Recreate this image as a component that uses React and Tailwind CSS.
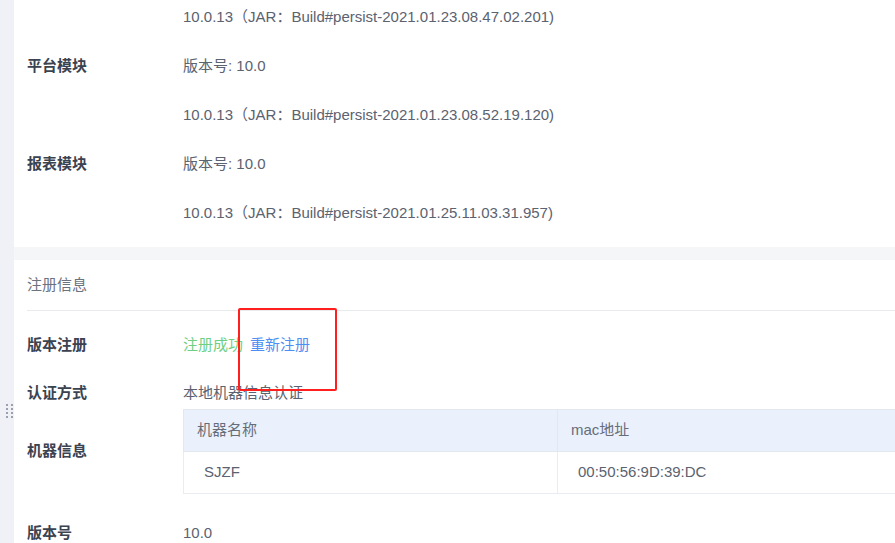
import React from 'react';

const modules = [
    { label: '', value: '10.0.13（JAR：Build#persist-2021.01.23.08.47.02.201)' },
    { label: '平台模块', value: '版本号: 10.0' },
    { label: '', value: '10.0.13（JAR：Build#persist-2021.01.23.08.52.19.120)' },
    { label: '报表模块', value: '版本号: 10.0' },
    { label: '', value: '10.0.13（JAR：Build#persist-2021.01.25.11.03.31.957)' },
];

function Grip() {
    return (
        <div className="grid grid-cols-2 gap-x-[2px] gap-y-[2px]">
            {[0, 1, 2, 3, 4, 5, 6, 7].map(i => (
                <span key={i} className="block h-[2px] w-[2px] bg-[#9aa1ad]" />
            ))}
        </div>
    );
}

export default function App() {
    return (
        <div
            className="relative flex h-[543px] w-[895px] overflow-hidden bg-[#f5f6f8] text-[15px]"
            style={{ fontFamily: '"Liberation Sans", "Noto Sans CJK SC", sans-serif' }}
        >
            {/* left edge strip */}
            <div className="w-[14px] shrink-0 bg-[#eff1f7] pt-[404px] pl-[6px]">
                <Grip />
            </div>

            <div className="flex min-w-0 flex-1 flex-col gap-[13px]">
                {/* module versions */}
                <div className="h-[247px] shrink-0 overflow-hidden bg-white pl-[13px]">
                    <div className="mt-[-7px]">
                        {modules.map((m, i) => (
                            <div key={i} className="flex h-[49px] items-center">
                                <div className="w-[156px] shrink-0 font-bold text-[#3b4250]">{m.label}</div>
                                <div className="whitespace-nowrap text-[#5b6270]">{m.value}</div>
                            </div>
                        ))}
                    </div>
                </div>

                {/* registration info */}
                <div className="flex-1 bg-white pl-[13px]">
                    <div className="flex h-[51px] items-center border-b border-[#e8eaee] text-[#6b7280]">
                        注册信息
                    </div>

                    <div className="mt-[10px] flex h-[48px] items-center">
                        <div className="w-[156px] shrink-0 font-bold text-[#3b4250]">版本注册</div>
                        <span className="text-[#6dd083]">注册成功</span>
                        <span className="ml-[7px] text-[#4d8ff2]">重新注册</span>
                    </div>

                    <div className="flex h-[40px] items-center pt-[8px]">
                        <div className="w-[156px] shrink-0 font-bold text-[#3b4250]">认证方式</div>
                        <div className="text-[#5b6270]">本地机器信息认证</div>
                    </div>

                    <div className="flex items-center">
                        <div className="w-[156px] shrink-0 font-bold text-[#3b4250]">机器信息</div>
                        <div className="min-w-0 flex-1">
                            <table className="w-[760px] border-collapse border border-[#e9ecf0] text-left">
                                <thead>
                                    <tr className="h-[42px] bg-[#eaf1fc] text-[#666d7a]">
                                        <th className="w-[374px] border border-[#e3e7ee] pl-[13px] font-normal">机器名称</th>
                                        <th className="border border-[#e3e7ee] pl-[13px] font-normal">mac地址</th>
                                    </tr>
                                </thead>
                                <tbody>
                                    <tr className="h-[42px] text-[#5b6270]">
                                        <td className="border border-[#e9ecf0] pl-[20px]">SJZF</td>
                                        <td className="border border-[#e9ecf0] pl-[20px]">00:50:56:9D:39:DC</td>
                                    </tr>
                                </tbody>
                            </table>
                        </div>
                    </div>

                    <div className="mt-[19px] flex h-[40px] items-center">
                        <div className="w-[156px] shrink-0 font-bold text-[#3b4250]">版本号</div>
                        <div className="text-[#5b6270]">10.0</div>
                    </div>
                </div>
            </div>

            {/* red annotation box */}
            <div className="pointer-events-none absolute left-[238px] top-[308px] h-[83px] w-[99px] rounded-[2px] border-2 border-[#ff1f1f]" />
        </div>
    );
}
